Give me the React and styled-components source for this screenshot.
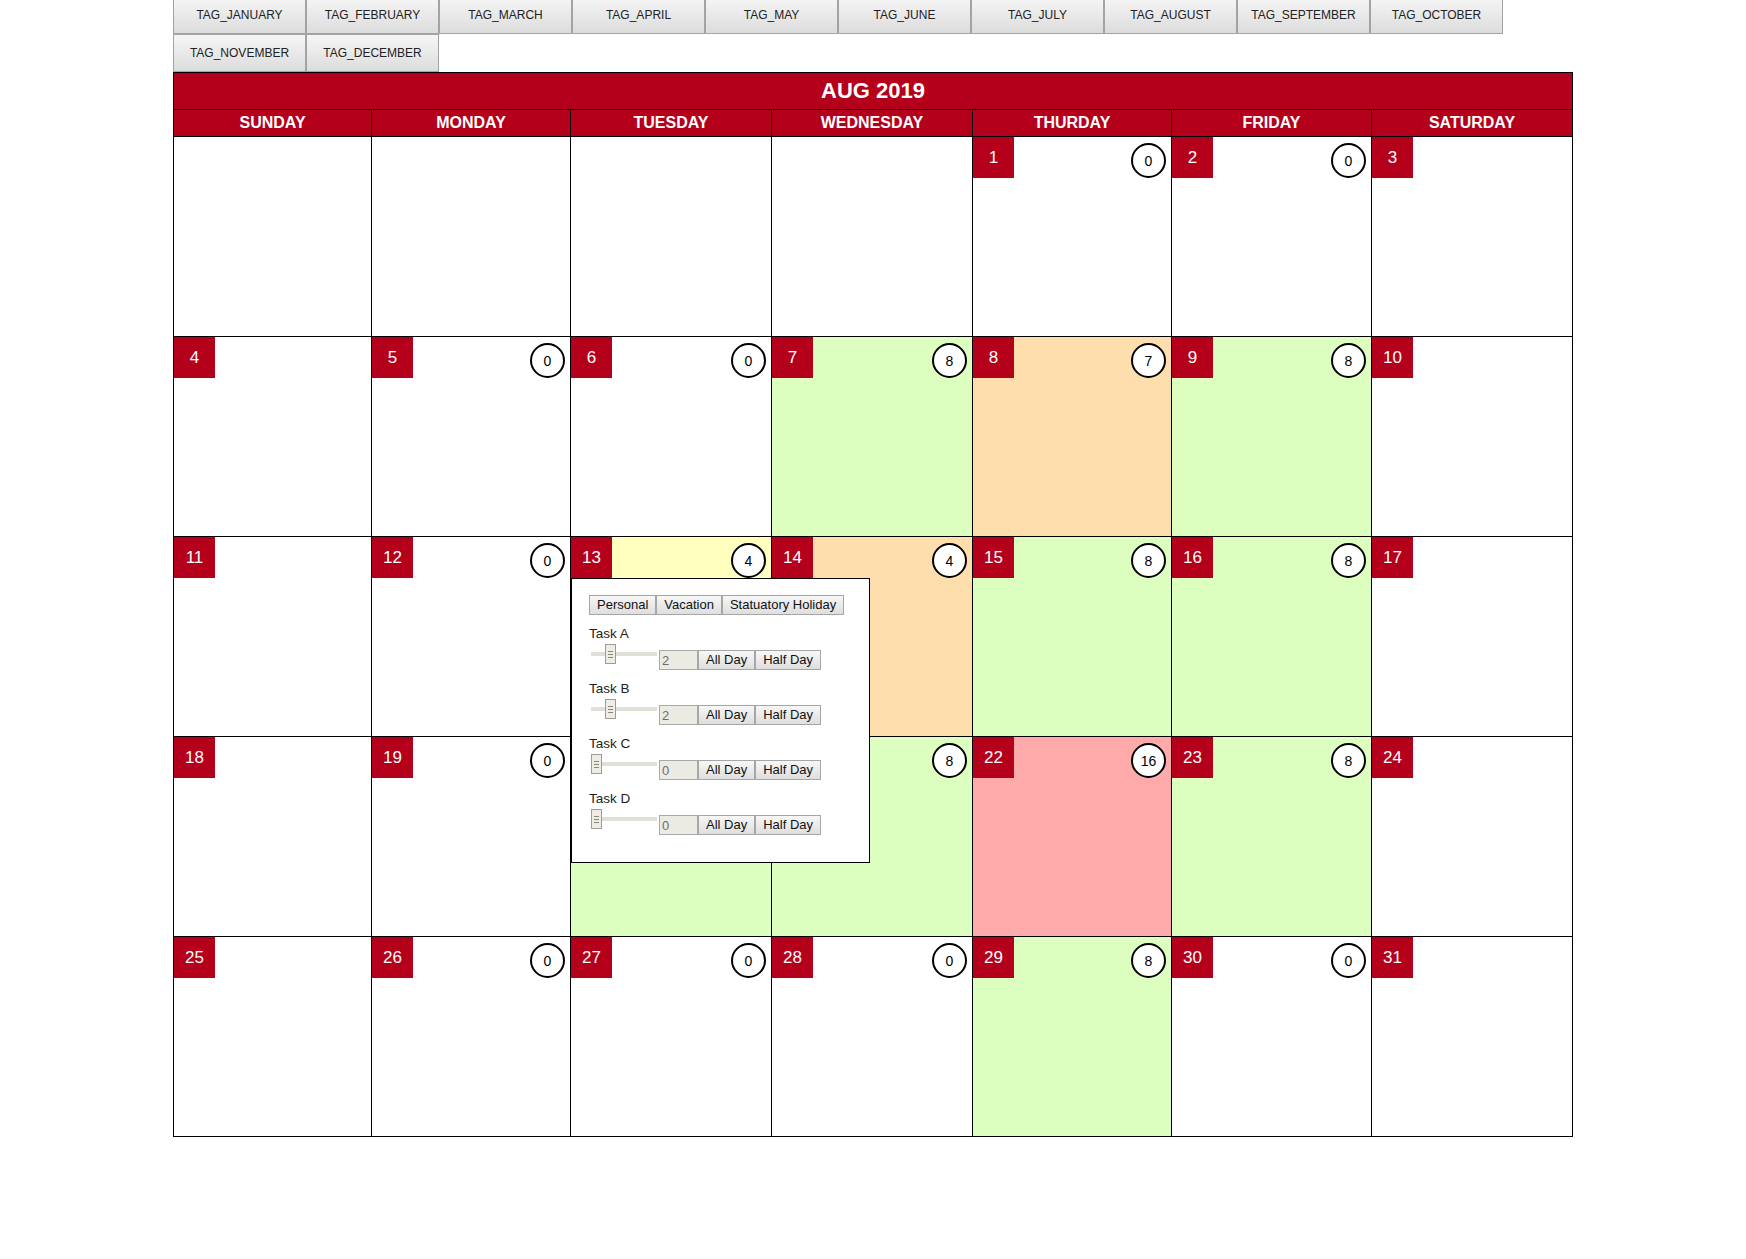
import React from 'react';
import styled, { createGlobalStyle } from 'styled-components';

const GlobalStyle = createGlobalStyle`
  body {
    margin: 0;
    background: #fff;
    font-family: "Liberation Sans", Arial, sans-serif;
  }
`;

const RED = '#b5001b';

const COLORS = {
  green: '#dcffc0',
  orange: '#ffdead',
  yellow: '#ffffc0',
  pink: '#ffaaaa',
};

const MONTHS = [
  'TAG_JANUARY', 'TAG_FEBRUARY', 'TAG_MARCH', 'TAG_APRIL', 'TAG_MAY', 'TAG_JUNE',
  'TAG_JULY', 'TAG_AUGUST', 'TAG_SEPTEMBER', 'TAG_OCTOBER', 'TAG_NOVEMBER', 'TAG_DECEMBER',
];

const DAYS = ['SUNDAY', 'MONDAY', 'TUESDAY', 'WEDNESDAY', 'THURDAY', 'FRIDAY', 'SATURDAY'];

// null = empty slot before the 1st; count undefined = weekend (no circle)
const WEEKS = [
  [null, null, null, null, { d: 1, c: 0 }, { d: 2, c: 0 }, { d: 3 }],
  [{ d: 4 }, { d: 5, c: 0 }, { d: 6, c: 0 }, { d: 7, c: 8, bg: 'green' }, { d: 8, c: 7, bg: 'orange' }, { d: 9, c: 8, bg: 'green' }, { d: 10 }],
  [{ d: 11 }, { d: 12, c: 0 }, { d: 13, c: 4, bg: 'yellow', open: true }, { d: 14, c: 4, bg: 'orange' }, { d: 15, c: 8, bg: 'green' }, { d: 16, c: 8, bg: 'green' }, { d: 17 }],
  [{ d: 18 }, { d: 19, c: 0 }, { d: 20, c: 8, bg: 'green' }, { d: 21, c: 8, bg: 'green' }, { d: 22, c: 16, bg: 'pink' }, { d: 23, c: 8, bg: 'green' }, { d: 24 }],
  [{ d: 25 }, { d: 26, c: 0 }, { d: 27, c: 0 }, { d: 28, c: 0 }, { d: 29, c: 8, bg: 'green' }, { d: 30, c: 0 }, { d: 31 }],
];

const TASKS = [
  { name: 'Task A', hours: 2 },
  { name: 'Task B', hours: 2 },
  { name: 'Task C', hours: 0 },
  { name: 'Task D', hours: 0 },
];

const Page = styled.div`
  width: 1400px;
  margin: 0 auto;
`;

const TabBar = styled.div`
  display: flex;
  flex-wrap: wrap;
  margin-top: -4px;
`;

const Tab = styled.button`
  width: 133px;
  height: 38px;
  box-sizing: border-box;
  border: 1px solid #a3a3a3;
  border-radius: 0;
  background: linear-gradient(#f6f6f6, #dcdcdc);
  color: #222;
  font-family: "Liberation Sans", Arial, sans-serif;
  font-size: 12px;
  padding: 0;
  cursor: pointer;
`;

const Calendar = styled.div`
  display: grid;
  grid-template-columns: 197px 198px 200px 200px 198px 199px 200px;
  gap: 1px;
  background: #000;
  border: 1px solid #000;
  box-sizing: border-box;
  width: 1400px;
`;

const Title = styled.div`
  grid-column: 1 / -1;
  height: 36px;
  background: ${RED};
  color: #fff;
  font-size: 22px;
  font-weight: bold;
  display: flex;
  align-items: center;
  justify-content: center;
`;

const DayName = styled.div`
  height: 26px;
  background: ${RED};
  color: #fff;
  font-size: 16px;
  font-weight: bold;
  display: flex;
  align-items: center;
  justify-content: center;
`;

const Cell = styled.div`
  height: 199px;
  background: ${p => (p.$bg ? COLORS[p.$bg] : '#fff')};
  position: relative;
  display: flex;
  justify-content: space-between;
  align-items: flex-start;
`;

const DayNum = styled.div`
  width: 41px;
  height: 41px;
  background: ${RED};
  color: #fff;
  font-size: 17px;
  display: flex;
  align-items: center;
  justify-content: center;
`;

const Count = styled.div`
  width: 35px;
  height: 35px;
  box-sizing: border-box;
  margin: 6px 5px 0 0;
  border: 2px solid #000;
  border-radius: 50%;
  background: #fff;
  color: #000;
  font-size: 14px;
  display: flex;
  align-items: center;
  justify-content: center;
`;

const Popup = styled.div`
  position: absolute;
  top: 41px;
  left: 0;
  z-index: 10;
  width: 299px;
  box-sizing: border-box;
  background: #fff;
  border: 1px solid #000;
  padding: 16px 17px 27px;
  font-size: 13px;
  color: #111;
`;

const ButtonGroup = styled.div`
  display: flex;
`;

const Btn = styled.button`
  height: 20px;
  box-sizing: border-box;
  padding: 0 7px;
  border: 1px solid #a6a6a6;
  border-radius: 0;
  background: linear-gradient(#f7f7f7, #dedede);
  color: #111;
  font-family: "Liberation Sans", Arial, sans-serif;
  font-size: 13px;
  line-height: 18px;
  cursor: pointer;
`;

const Task = styled.div`
  margin-top: 11px;
`;

const TaskLabel = styled.div`
  line-height: 16px;
  font-size: 13.5px;
  color: #222;
`;

const TaskRow = styled.div`
  display: flex;
  align-items: flex-start;
  margin-top: 2px;
  height: 26px;
`;

const Slider = styled.div`
  position: relative;
  width: 66px;
  height: 20px;
  margin: 0 2px 0 2px;
`;

const Track = styled.div`
  position: absolute;
  left: 0;
  right: 0;
  top: 8px;
  height: 4px;
  background: #e2dfd9;
`;

const Thumb = styled.div`
  position: absolute;
  top: 0;
  width: 11px;
  height: 20px;
  box-sizing: border-box;
  border: 1px solid #a09c94;
  background: #efece6;
  display: flex;
  flex-direction: column;
  align-items: center;
  justify-content: center;
  gap: 2px;

  span {
    display: block;
    width: 5px;
    height: 1px;
    background: #8a867f;
  }
`;

const Hours = styled.input`
  width: 39px;
  height: 20px;
  margin-top: 6px;
  box-sizing: border-box;
  padding: 0 2px;
  border: 1px solid #a9a9a9;
  background: #ebebe4;
  color: #6d6d6d;
  font-family: "Liberation Sans", Arial, sans-serif;
  font-size: 13px;
  outline: none;
`;

const RowBtn = styled(Btn)`
  margin-top: 6px;
`;

const MAX_HOURS = 8;

const TaskEditor = () => (
  <Popup>
    <ButtonGroup>
      <Btn>Personal</Btn>
      <Btn>Vacation</Btn>
      <Btn>Statuatory Holiday</Btn>
    </ButtonGroup>
    {TASKS.map(t => (
      <Task key={t.name}>
        <TaskLabel>{t.name}</TaskLabel>
        <TaskRow>
          <Slider>
            <Track />
            <Thumb style={{ left: `${(t.hours / MAX_HOURS) * 55}px` }}>
              <span /><span /><span />
            </Thumb>
          </Slider>
          <Hours type="text" value={t.hours} readOnly />
          <RowBtn>All Day</RowBtn>
          <RowBtn>Half Day</RowBtn>
        </TaskRow>
      </Task>
    ))}
  </Popup>
);

const App = () => (
  <>
    <GlobalStyle />
    <Page>
      <TabBar>
        {MONTHS.map(m => <Tab key={m}>{m}</Tab>)}
      </TabBar>
      <Calendar>
        <Title>AUG 2019</Title>
        {DAYS.map(d => <DayName key={d}>{d}</DayName>)}
        {WEEKS.flat().map((day, i) =>
          day ? (
            <Cell key={i} $bg={day.bg}>
              <DayNum>{day.d}</DayNum>
              {day.c !== undefined && <Count>{day.c}</Count>}
              {day.open && <TaskEditor />}
            </Cell>
          ) : (
            <Cell key={i} />
          )
        )}
      </Calendar>
    </Page>
  </>
);

export default App;
